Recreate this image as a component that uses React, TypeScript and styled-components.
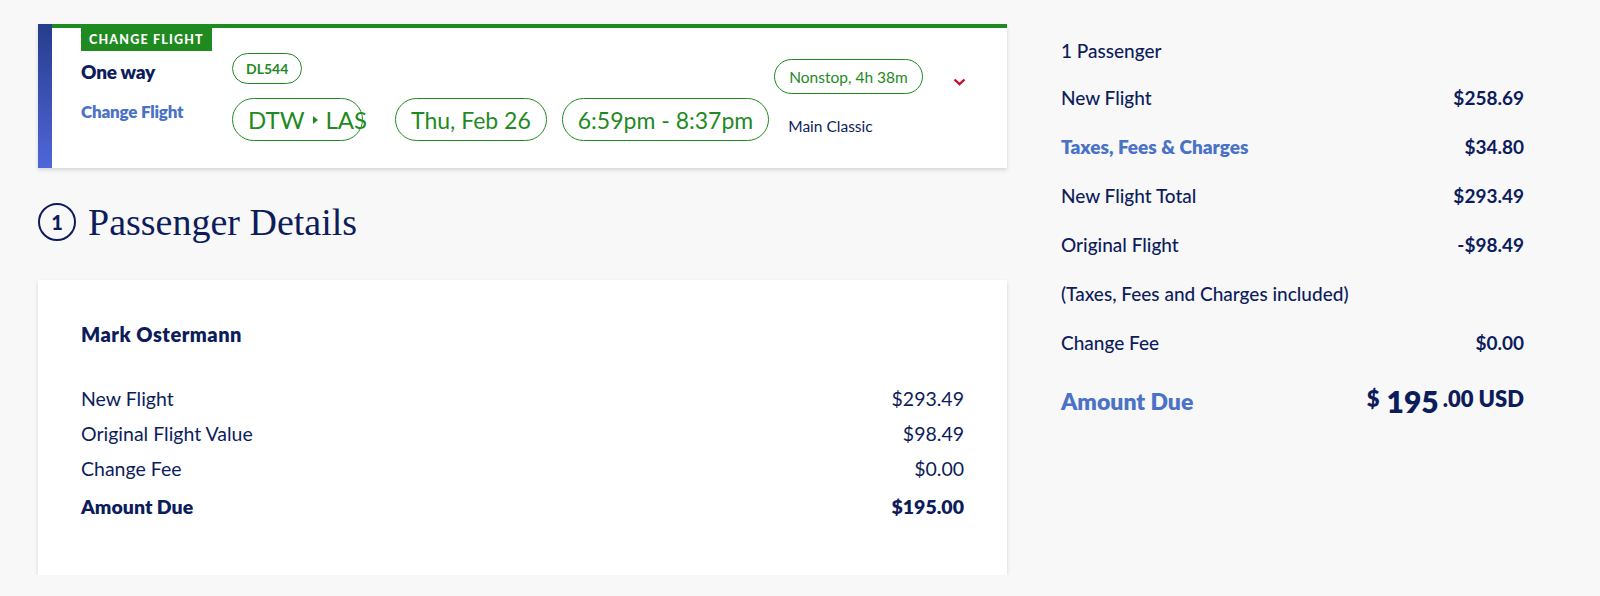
import React from "react";
import styled, { createGlobalStyle } from "styled-components";

const navy = "#0d1d5c";
const blue = "#4a72c6";
const green = "#1f8a1f";

const GlobalStyle = createGlobalStyle`
  body {
    margin: 0;
    background: #f8f8f8;
    font-family: Lato, "Noto Sans", sans-serif;
    color: ${navy};
  }
`;

const Page = styled.div`
  display: flex;
  align-items: flex-start;
  gap: 54px;
  padding: 24px 0 0 38px;
`;

const LeftColumn = styled.div`
  width: 969px;
  display: flex;
  flex-direction: column;
`;

const FlightCard = styled.div`
  display: flex;
  height: 144px;
  background: #fff;
  box-shadow: 0 2px 4px rgba(0, 0, 0, 0.14);
`;

const AccentBar = styled.div`
  width: 14px;
  background: linear-gradient(#263d8c, #4f66da);
`;

const FlightBody = styled.div`
  flex: 1;
  border-top: 4px solid ${green};
  padding-left: 29px;
`;

const Badge = styled.div`
  display: inline-block;
  height: 23px;
  line-height: 23px;
  padding: 0 8px;
  background: ${green};
  color: #fff;
  font-size: 12.5px;
  font-weight: 900;
  letter-spacing: 1.2px;
  text-transform: uppercase;
`;

const FlightContent = styled.div`
  display: flex;
  align-items: flex-start;
`;

const FlightGrid = styled.div`
  display: grid;
  grid-template-columns: 151px auto;
  row-gap: 14px;
  padding-top: 2px;
`;

const TripLabel = styled.div<{ $link?: boolean; $offset: number }>`
  margin-top: ${(p) => p.$offset}px;
  line-height: 20px;
  font-size: ${(p) => (p.$link ? 17 : 19)}px;
  font-weight: 800;
  letter-spacing: ${(p) => (p.$link ? "-0.2px" : "-0.2px")};
  color: ${(p) => (p.$link ? blue : navy)};
`;

const PillRow = styled.div`
  display: flex;
  gap: 15px;
`;

const Pill = styled.div<{ $size: "sm" | "md" | "lg"; $width?: number }>`
  display: inline-flex;
  align-items: center;
  box-sizing: border-box;
  height: ${(p) => (p.$size === "lg" ? 43 : p.$size === "md" ? 35 : 31)}px;
  ${(p) => (p.$width ? `width: ${p.$width}px;` : "")}
  padding: 0 ${(p) => (p.$size === "lg" ? 15 : p.$size === "md" ? 14 : 13)}px;
  border: 1px solid ${green};
  border-radius: 22px;
  color: ${green};
  font-size: ${(p) => (p.$size === "lg" ? 23 : p.$size === "md" ? 15.5 : 14)}px;
  font-weight: ${(p) => (p.$size === "sm" ? 700 : 400)};
  white-space: nowrap;
  overflow: visible;
`;

const RoutePill = styled(Pill)`
  margin-right: 17px;
  gap: 8px;
  font-size: 24px;
`;

const Arrow = styled.svg`
  flex: none;
`;

const SideColumn = styled.div`
  display: flex;
  flex-direction: column;
  align-items: flex-start;
  margin-left: 5px;
  padding-top: 8px;
`;

const FareClass = styled.div`
  margin-top: 22px;
  padding-left: 14px;
  line-height: 20px;
  font-size: 15.5px;
`;

const Chevron = styled.svg`
  margin: 27px 0 0 30px;
`;

const SectionHeading = styled.div`
  display: flex;
  align-items: center;
  gap: 12px;
  margin-top: 35px;
`;

const StepCircle = styled.div`
  box-sizing: border-box;
  width: 38px;
  height: 38px;
  border: 2.5px solid ${navy};
  border-radius: 50%;
  display: flex;
  align-items: center;
  justify-content: center;
  font-size: 20px;
  font-weight: 900;
`;

const HeadingText = styled.h2`
  margin: 0;
  font-family: "Liberation Serif", "Times New Roman", serif;
  font-weight: 400;
  font-size: 38px;
  line-height: 38px;
`;

const DetailsCard = styled.div`
  margin-top: 39px;
  height: 295px;
  box-sizing: border-box;
  padding: 42px 43px 0;
  background: #fff;
  box-shadow: 0 2px 4px rgba(0, 0, 0, 0.14);
`;

const PassengerName = styled.div`
  line-height: 24px;
  font-size: 20px;
  font-weight: 800;
  letter-spacing: 0.5px;
`;

const DetailList = styled.div`
  margin-top: 35px;
`;

const DetailRow = styled.div<{ $total?: boolean }>`
  display: flex;
  justify-content: space-between;
  align-items: center;
  height: 35px;
  margin-top: ${(p) => (p.$total ? 3 : 0)}px;
  font-size: 19.5px;
  font-weight: ${(p) => (p.$total ? 800 : 400)};
`;

const Summary = styled.div`
  width: 463px;
  padding-top: 2px;
`;

const SummaryRow = styled.div<{ $link?: boolean; $gap?: number }>`
  display: flex;
  justify-content: space-between;
  align-items: center;
  height: 49px;
  margin-top: ${(p) => p.$gap ?? 0}px;
  font-size: 19px;
  font-weight: 500;
  color: ${(p) => (p.$link ? blue : navy)};
`;

const SummaryLabel = styled.span<{ $bold?: boolean }>`
  font-weight: ${(p) => (p.$bold ? 800 : 500)};
`;

const SummaryValue = styled.span`
  font-weight: 700;
  color: ${navy};
`;

const DueLabel = styled.span`
  font-size: 23px;
  font-weight: 800;
  color: ${blue};
`;

const DueValue = styled.span`
  font-weight: 800;
  color: ${navy};
  white-space: nowrap;
`;

const DueSmall = styled.span`
  font-size: 22px;
  vertical-align: 6px;
`;

const DueBig = styled.span`
  font-size: 30px;
  margin: 0 4px 0 7px;
`;

const flightPills = [
  { size: "lg" as const, text: "Thu, Feb 26" },
  { size: "lg" as const, text: "6:59pm - 8:37pm" },
];

const details = [
  { label: "New Flight", value: "$293.49" },
  { label: "Original Flight Value", value: "$98.49" },
  { label: "Change Fee", value: "$0.00" },
];

const summary = [
  { label: "New Flight", value: "$258.69" },
  { label: "Taxes, Fees & Charges", value: "$34.80", link: true },
  { label: "New Flight Total", value: "$293.49" },
  { label: "Original Flight", value: "-$98.49" },
  { label: "(Taxes, Fees and Charges included)", value: "" },
  { label: "Change Fee", value: "$0.00" },
];

export default function App() {
  return (
    <>
      <GlobalStyle />
      <Page>
        <LeftColumn>
          <FlightCard>
            <AccentBar />
            <FlightBody>
              <Badge>Change Flight</Badge>
              <FlightContent>
                <FlightGrid>
                  <TripLabel $offset={9}>One way</TripLabel>
                  <div>
                    <Pill $size="sm">DL544</Pill>
                  </div>
                  <TripLabel $link $offset={4}>
                    Change Flight
                  </TripLabel>
                  <PillRow>
                    <RoutePill $size="lg" $width={131}>
                      DTW
                      <Arrow width="5" height="8" viewBox="0 0 5 8">
                        <path d="M0 0 L5 4 L0 8 Z" fill={green} />
                      </Arrow>
                      LAS
                    </RoutePill>
                    {flightPills.map((p, i) => (
                      <Pill key={i} $size={p.size}>
                        {p.text}
                      </Pill>
                    ))}
                  </PillRow>
                </FlightGrid>
                <SideColumn>
                  <Pill $size="md">Nonstop, 4h 38m</Pill>
                  <FareClass>Main Classic</FareClass>
                </SideColumn>
                <Chevron width="13" height="8" viewBox="0 0 13 8">
                  <path
                    d="M1.5 1.5 L6.5 6.2 L11.5 1.5"
                    fill="none"
                    stroke="#c8102e"
                    strokeWidth="2.4"
                  />
                </Chevron>
              </FlightContent>
            </FlightBody>
          </FlightCard>

          <SectionHeading>
            <StepCircle>1</StepCircle>
            <HeadingText>Passenger Details</HeadingText>
          </SectionHeading>

          <DetailsCard>
            <PassengerName>Mark Ostermann</PassengerName>
            <DetailList>
              {details.map((d) => (
                <DetailRow key={d.label}>
                  <span>{d.label}</span>
                  <span>{d.value}</span>
                </DetailRow>
              ))}
              <DetailRow $total>
                <span>Amount Due</span>
                <span>$195.00</span>
              </DetailRow>
            </DetailList>
          </DetailsCard>
        </LeftColumn>

        <Summary>
          <SummaryRow>1 Passenger</SummaryRow>
          {summary.map((s, i) => (
            <SummaryRow key={i} $link={s.link} $gap={i === 0 ? -2 : 0}>
              <SummaryLabel $bold={s.link}>{s.label}</SummaryLabel>
              <SummaryValue>{s.value}</SummaryValue>
            </SummaryRow>
          ))}
          <SummaryRow $gap={9}>
            <DueLabel>Amount Due</DueLabel>
            <DueValue>
              <DueSmall>$</DueSmall>
              <DueBig>195</DueBig>
              <DueSmall>.00 USD</DueSmall>
            </DueValue>
          </SummaryRow>
        </Summary>
      </Page>
    </>
  );
}
